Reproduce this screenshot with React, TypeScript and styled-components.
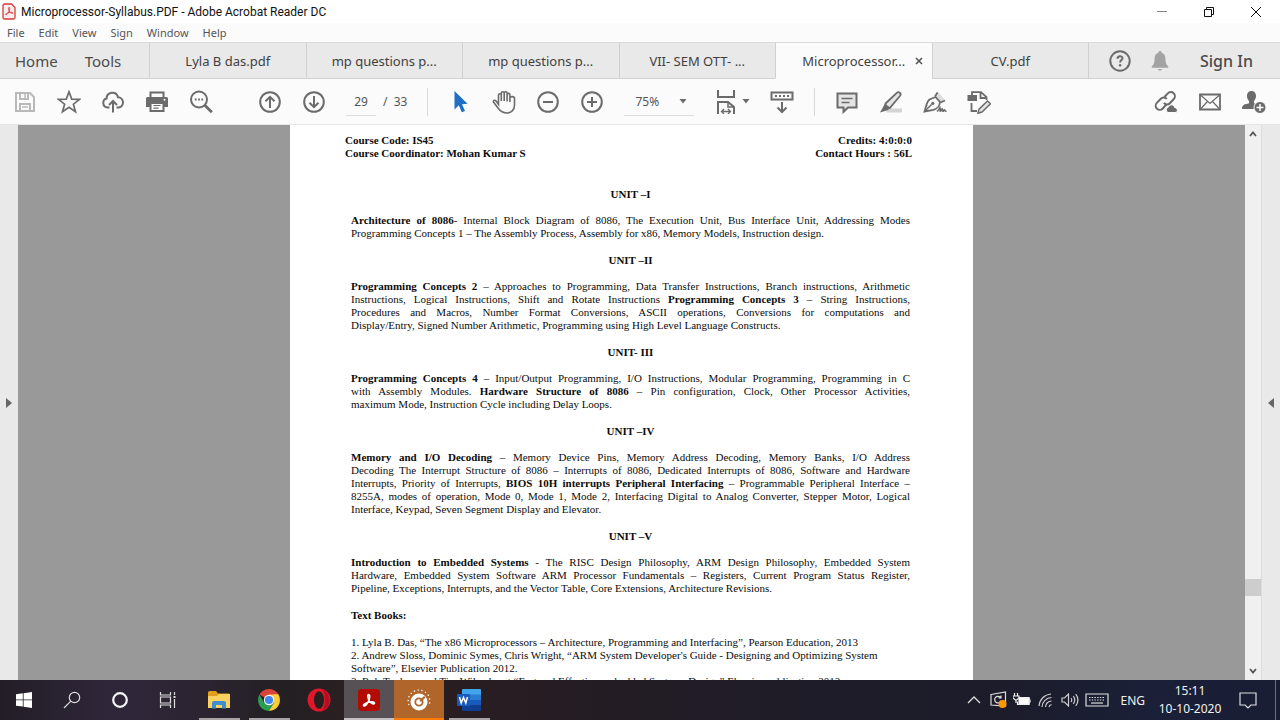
import React from "react";
import styled, { createGlobalStyle } from "styled-components";

const UI = `"Noto Sans", "Open Sans", sans-serif`;

const GlobalStyle = createGlobalStyle`
  * { box-sizing: border-box; }
  html, body { margin: 0; padding: 0; }
  body { font-family: ${UI}; background: #999; color: #333; }
  button { font: inherit; color: inherit; border: 0; background: none; padding: 0; margin: 0; display: flex; align-items: center; justify-content: center; }
  svg { display: block; flex: none; }
`;

const Window = styled.div`
  display: flex;
  flex-direction: column;
  height: 100vh;
  overflow: hidden;
`;

const TitleBar = styled.header`
  display: flex;
  align-items: center;
  height: 23px;
  flex: none;
  background: #fff;
  padding: 0 1px 0 2px;
`;

const Title = styled.h1`
  flex: 1;
  margin: 0 0 0 5px;
  font-family: Roboto, "Open Sans", sans-serif;
  font-size: 12px;
  line-height: 22px;
  font-weight: 400;
  color: #111;
`;

const WindowButton = styled.button`
  width: 47px;
  height: 23px;
`;

const MenuBar = styled.nav`
  display: flex;
  gap: 14px;
  height: 19px;
  flex: none;
  padding-left: 7px;
  background: #fbfbfb;
`;

const MenuItem = styled.button`
  font-size: 11px;
  line-height: 18px;
  color: #555;
`;

const TabBar = styled.div`
  display: flex;
  height: 37px;
  flex: none;
  background: #e9e9e9;
  border-top: 1px solid #dcdcdc;
`;

const MainTabs = styled.div`
  display: flex;
  align-items: center;
  gap: 27px;
  width: 149px;
  padding-left: 15px;
  border-bottom: 1px solid #d0d0d0;
`;

const MainTab = styled.button`
  font-size: 15px;
  line-height: 20px;
  color: #4b4b4b;
`;

const FileTab = styled.button<{ $active?: boolean }>`
  flex: 1;
  position: relative;
  font-size: 13px;
  line-height: 20px;
  color: #3f3f3f;
  border-left: 1px solid #d0d0d0;
  border-bottom: 1px solid ${(p) => (p.$active ? "#fbfbfb" : "#d0d0d0")};
  background: ${(p) => (p.$active ? "#fbfbfb" : "transparent")};
`;

const CloseMark = styled.span`
  position: absolute;
  right: 9px;
  top: 14px;
`;

const Account = styled.div`
  display: flex;
  align-items: center;
  width: 192px;
  padding-left: 20px;
  border-left: 1px solid #d0d0d0;
  border-bottom: 1px solid #d0d0d0;
`;

const BellButton = styled.button`
  margin-left: 20px;
`;

const SignIn = styled.button`
  margin-left: 31px;
  font-size: 16px;
  line-height: 20px;
  font-weight: 500;
  color: #4b4b4b;
`;

const ToolBar = styled.div`
  display: flex;
  align-items: center;
  height: 46px;
  flex: none;
  padding: 0 14px 0 13px;
  background: #fbfbfb;
  border-bottom: 1px solid #e6e6e6;
  font-size: 12px;
  color: #555;
`;

const ToolGroup = styled.div<{ $left?: number }>`
  display: flex;
  align-items: center;
  gap: 20px;
  margin-left: ${(p) => p.$left ?? 0}px;
`;

const ToolButton = styled.button`
  width: 24px;
  height: 24px;
`;

const MenuToolButton = styled(ToolButton)`
  width: 38px;
  justify-content: space-between;
`;

const Divider = styled.span<{ $left: number }>`
  width: 1px;
  height: 28px;
  margin-left: ${(p) => p.$left}px;
  background: #d8d8d8;
`;

const PageField = styled.label`
  display: flex;
  align-items: center;
  gap: 7px;
  margin-left: 20px;
  line-height: 20px;
  white-space: pre;
`;

const PageInput = styled.input`
  width: 30px;
  height: 28px;
  padding: 0;
  border: 0;
  border-bottom: 1px solid #dedede;
  background: none;
  text-align: center;
  font: 12px/20px ${UI};
  color: #555;
`;

const ZoomField = styled.div`
  display: flex;
  align-items: center;
  width: 70px;
  height: 28px;
  margin-left: 20px;
  padding-right: 7px;
  border-bottom: 1px solid #dedede;
`;

const ZoomSelect = styled.select`
  flex: 1;
  min-width: 0;
  height: 28px;
  padding: 1px 0 0 11px;
  border: 0;
  background: none;
  appearance: none;
  font: 12px/20px ${UI};
  color: #555;
`;

const Spacer = styled.span`
  flex: 1;
`;

const Workspace = styled.main`
  display: flex;
  flex: 1;
  min-height: 0;
  background: #999;
`;

const SidePanel = styled.button`
  width: 18px;
  flex: none;
  background: #e9e9e9;
`;

const Canvas = styled.div`
  flex: 1;
  display: flex;
  justify-content: center;
  overflow: hidden;
`;

const Page = styled.article`
  width: 683px;
  flex: none;
  padding: 9px 61px 0 55px;
  background: #fff;
  color: #0c0c0c;
  font: 11px/13px "Liberation Serif", serif;
`;

const CourseHeader = styled.div`
  display: flex;
  justify-content: space-between;
  margin-bottom: 28px;
  font-weight: 700;
  white-space: pre-line;
`;

const RightColumn = styled.div`
  text-align: right;
`;

const Body = styled.div`
  padding: 0 2px 0 6px;
`;

const UnitTitle = styled.h2`
  margin: 0 0 13px;
  font-size: 11px;
  line-height: 13px;
  text-align: center;
`;

const Paragraph = styled.p`
  margin: 0 0 14px;
`;

const Line = styled.span`
  display: block;
  text-align: justify;
  text-align-last: justify;

  &:last-child {
    text-align-last: auto;
  }
`;

const BooksTitle = styled(UnitTitle)`
  margin-bottom: 14px;
  text-align: left;
`;

const Book = styled.p`
  margin: 0;
`;

const ScrollTrack = styled.div`
  display: flex;
  flex-direction: column;
  align-items: center;
  width: 17px;
  flex: none;
  background: #f0f0f0;
  border-right: 1px solid #dcdcdc;
`;

const ScrollButton = styled.button`
  width: 16px;
  height: 18px;
`;

const ScrollGap = styled.div<{ $grow: number }>`
  flex: ${(p) => p.$grow};
`;

const ScrollThumb = styled.div`
  width: 16px;
  height: 17px;
  background: #cdcdcd;
`;

const TaskBar = styled.footer`
  display: flex;
  align-items: stretch;
  height: 40px;
  flex: none;
  color: #f2f2f2;
  background: linear-gradient(90deg, #221e27 0%, #30263a 9%, #2c2431 16%, #231f22 22%, #2a2021 28%, #271d22 40%, #1f1c28 60%, #1c1c2a 78%, #1a2038 90%, #191d34 100%);
`;

const TaskApps = styled.div`
  display: flex;
  margin-left: 2px;
`;

const TaskItem = styled.button<{ $bg?: string; $line?: string }>`
  position: relative;
  width: 50px;
  background: ${(p) => p.$bg ?? "transparent"};

  &::after {
    content: "";
    position: absolute;
    bottom: 0;
    left: ${(p) => (p.$bg ? 0 : 5)}px;
    right: ${(p) => (p.$bg ? 0 : 4)}px;
    height: 2px;
    background: ${(p) => p.$line ?? "transparent"};
  }
`;

const SystemItem = styled.button`
  width: 48px;
`;

const Tray = styled.div`
  display: flex;
  align-items: center;
  gap: 6px;
  margin-left: auto;
`;

const TrayButton = styled.button`
  min-width: 18px;
  height: 40px;
  font-size: 12px;
`;

const Language = styled(TrayButton)`
  margin: 0 3px 0 5px;
`;

const Clock = styled.button`
  flex-direction: column;
  width: 72px;
  font-size: 12px;
  line-height: 18px;
`;

const Notifications = styled(TrayButton)`
  width: 32px;
  margin-right: 5px;
`;

const DesktopEdge = styled.button`
  width: 5px;
  height: 40px;
  border-left: 1px solid #6b6f80;
`;

type IconProps = { w?: number; h?: number; color?: string; stroke?: number; children: React.ReactNode };

const Icon = ({ w = 24, h = 24, color = "#6b6b6b", stroke = 2, children }: IconProps) => (
  <svg width={w} height={h} viewBox={`0 0 ${w} ${h}`} fill="none" stroke={color} strokeWidth={stroke} aria-hidden="true">
    {children}
  </svg>
);

const Caret = () => (
  <Icon w={8} h={5} stroke={0}><path d="M0.5 0h7L4 4.6z" fill="#6b6b6b" /></Icon>
);

const ACROBAT = "M7 3c1.4 0 .9 2.6.4 4-.5 1.500-2.200 4.400-3.500 4.400-1.500 0 .2-2.100 3-2.700 2.300-.6 4.600-.4 4.600.6 0 1.200-2.400.3-3.500-1C6.700 6.900 6 3 7 3z";

export default function App() {
  return (
    <Window>
      <GlobalStyle />
      <TitleBar>
        <Icon w={14} h={17} stroke={1.3} color="#d23b38">
          <path d="M2.500 1h7L13 4.500V14.500a1.500 1.500 0 0 1-1.500 1.500h-9A1.500 1.500 0 0 1 1 14.500v-12A1.500 1.500 0 0 1 2.500 1z" fill="#fbeeee" />
          <path d={ACROBAT} strokeWidth="1" transform="translate(0.6 1.600) scale(.9)" />
        </Icon>
        <Title>Microprocessor-Syllabus.PDF - Adobe Acrobat Reader DC</Title>
        <WindowButton aria-label="Minimize"><Icon w={12} h={12} stroke={1} color="#888"><path d="M1 5.500h10" /></Icon></WindowButton>
        <WindowButton aria-label="Restore"><Icon w={12} h={12} stroke={1} color="#111"><path d="M1.500 3.500h7v7h-7zM3.500 3.500v-2h7v7h-2" /></Icon></WindowButton>
        <WindowButton aria-label="Close"><Icon w={12} h={12} stroke={1} color="#111"><path d="M1 1l10 10M11 1L1 11" /></Icon></WindowButton>
      </TitleBar>
      <MenuBar>
        {["File", "Edit", "View", "Sign", "Window", "Help"].map((m) => <MenuItem key={m}>{m}</MenuItem>)}
      </MenuBar>
      <TabBar>
        <MainTabs>
          <MainTab>Home</MainTab>
          <MainTab>Tools</MainTab>
        </MainTabs>
        <FileTab>Lyla B das.pdf</FileTab>
        <FileTab>mp questions p...</FileTab>
        <FileTab>mp questions p...</FileTab>
        <FileTab>VII- SEM OTT- ...</FileTab>
        <FileTab $active>
          Microprocessor...
          <CloseMark><Icon w={8} h={8} stroke={1.6} color="#555"><path d="M1 1l6 6M7 1L1 7" /></Icon></CloseMark>
        </FileTab>
        <FileTab>CV.pdf</FileTab>
        <Account>
          <button aria-label="Help">
            <Icon w={22} h={22}>
              <circle cx="11" cy="11" r="9.700" />
              <path d="M8.500 8.800c0-3.300 5-3.300 5-.5 0 1.800-2.400 1.900-2.400 4.200" />
              <circle cx="11.100" cy="15.200" r="1.200" fill="#6b6b6b" stroke="none" />
            </Icon>
          </button>
          <BellButton aria-label="Notifications">
            <Icon w={18} h={20} stroke={0}>
              <path d="M9 0a1.600 1.600 0 0 1 1.600 1.800C13.500 2.600 14.400 5 14.400 8c0 4 .8 5.500 2.800 7.200v1.600H.8v-1.600C2.800 13.500 3.600 12 3.600 8c0-3 .9-5.400 3.800-6.200A1.600 1.600 0 0 1 9 0zM7 18h4c-.4 2-3.600 2-4 0z" fill="#a3a3a3" />
            </Icon>
          </BellButton>
          <SignIn>Sign In</SignIn>
        </Account>
      </TabBar>
      <ToolBar>
        <ToolGroup>
          <ToolButton aria-label="Save">
            <Icon color="#b9b9b9"><path d="M3 3h14l4 4v14H3zM7 3v6h8V3M7 21v-7h10v7" /><path d="M12 4v4M9 17h6" strokeWidth="1.500" /></Icon>
          </ToolButton>
          <ToolButton aria-label="Star">
            <Icon stroke={1.7}><path d="M12 1.800l2.700 7.300 7.800.3-6.100 4.800 2.100 7.500L12 17.300l-6.500 4.400 2.100-7.500L1.500 9.400l7.800-.3z" /></Icon>
          </ToolButton>
          <ToolButton aria-label="Upload to cloud">
            <Icon><path d="M8.500 17.500H6.500A4.600 4.600 0 0 1 5.600 8.500C5.800 1.600 15.300.6 17 7.200a5.200 5.200 0 0 1 .8 10.300h-2.300" /><path d="M12 22.500V11.500M8 15l4-4 4 4" /></Icon>
          </ToolButton>
          <ToolButton aria-label="Print">
            <Icon><path d="M5.500 8V2.500h13V8" /><path d="M1 8.500A1.500 1.500 0 0 1 2.500 7h19A1.500 1.500 0 0 1 23 8.500V17h-4v-4H5v4H1z" fill="#6b6b6b" stroke="none" /><path d="M5.500 13v8h13v-8z" fill="#fbfbfb" /><path d="M8.500 15.500h7M8.500 18.200h5" strokeWidth="1.200" /><circle cx="19.500" cy="9.800" r="1" fill="#fff" stroke="none" /></Icon>
          </ToolButton>
          <ToolButton aria-label="Search">
            <Icon><circle cx="10" cy="9.500" r="8" /><path d="M15.800 15.300l7 7" strokeWidth="2.800" /><path d="M5.800 9.500h1.800M9.100 9.500h1.800M12.400 9.500h1.800" strokeWidth="1.800" /></Icon>
          </ToolButton>
        </ToolGroup>
        <ToolGroup $left={45}>
          <ToolButton aria-label="Previous page"><Icon><circle cx="12" cy="12" r="9.800" /><path d="M12 18V7M7.500 11.300L12 6.800l4.500 4.500" /></Icon></ToolButton>
          <ToolButton aria-label="Next page"><Icon><circle cx="12" cy="12" r="9.800" /><path d="M12 6v11M7.500 12.700l4.500 4.500 4.500-4.500" /></Icon></ToolButton>
        </ToolGroup>
        <PageField>
          <PageInput defaultValue="29" aria-label="Page" />
          <span>/  33</span>
        </PageField>
        <Divider $left={20} />
        <ToolGroup $left={20}>
          <ToolButton aria-label="Select">
            <Icon stroke={0}><path d="M6.500 1v18.500l4.300-4.200 3 7 3.200-1.400-3-6.700 5.500-.4z" fill="#1f6fc6" /></Icon>
          </ToolButton>
          <ToolButton aria-label="Pan">
            <Icon stroke={1.600}>
              <path d="M6.500 14.500V5.200c0-1.900 2.800-1.900 2.800 0V11V3.200c0-2 2.900-2 2.900 0V11V3.200c0-2 2.900-2 2.900 0V11.500V4.800c0-1.900 2.800-1.900 2.800 0V12V8c0-1.900 4.600-1.900 4.600.5V15c0 5-3.500 8-7.500 8-4.300 0-6.700-1.700-9-5L1.800 12.600c-1.400-2 .9-3.100 2.300-1.500z" />
            </Icon>
          </ToolButton>
          <ToolButton aria-label="Zoom out"><Icon><circle cx="12" cy="12" r="9.800" /><path d="M7 12h10" /></Icon></ToolButton>
          <ToolButton aria-label="Zoom in"><Icon><circle cx="12" cy="12" r="9.800" /><path d="M7 12h10M12 7v10" /></Icon></ToolButton>
        </ToolGroup>
        <ZoomField>
          <ZoomSelect aria-label="Zoom level" defaultValue="75%"><option>75%</option></ZoomSelect>
          <Caret />
        </ZoomField>
        <ToolGroup $left={18}>
          <MenuToolButton aria-label="Fit width">
            <Icon w={26}><path d="M6 0v7h16V0M6 24V12h10l6 5v7" /><path d="M16 12v5h6" strokeWidth="1.500" /><path d="M9.500 21.500h9M12 19l-2.500 2.500L12 24M16 19l2.500 2.500L16 24" strokeWidth="1.300" /></Icon>
            <Caret />
          </MenuToolButton>
          <ToolButton aria-label="Scrolling">
            <Icon><path d="M1.500 2.500h21v7h-21z" /><path d="M5 6h2M9 6h2M13 6h2M17 6h2" /><path d="M12 12v10M7.500 17.500L12 22l4.500-4.500" /></Icon>
          </ToolButton>
        </ToolGroup>
        <Divider $left={20} />
        <ToolGroup $left={20}>
          <ToolButton aria-label="Comment">
            <Icon><path d="M2.500 3.500h19v14H13l-4.500 4.300v-4.300h-6z" fill="#e4e4e4" /><path d="M6.500 8.500h11M6.500 12.500h8" strokeWidth="1.500" /></Icon>
          </ToolButton>
          <ToolButton aria-label="Highlight">
            <Icon stroke={1.800}><path d="M9 18.500h14v4H7z" fill="#d4d4d4" stroke="none" /><path d="M6.500 13.500L17.800 2.800c2-1.900 5 .8 3.300 3L11 17.800l-4.500-.3z" fill="#e4e4e4" /><path d="M6 13.500l5.500 4.500-3 2.300L1 22.500z" fill="#6b6b6b" stroke="none" /></Icon>
          </ToolButton>
          <ToolButton aria-label="Sign">
            <Icon stroke={1.800}><path d="M12.500 6.500L15 1.500l7 9-4.500 2z" fill="#dcdcdc" stroke="none" /><path d="M1.500 21.500C3 17 3.500 12 6.500 9.500l6-2.500 4.500 5c-.5 5-2.500 6.500-6.500 7.800z" /><path d="M12 6.500l2.500-4M17.500 12.500l4.500-2" /><path d="M1.500 21.500l7-7" strokeWidth="1.400" /><circle cx="9.800" cy="13.400" r="1.600" fill="#6b6b6b" stroke="none" /><path d="M14 21.500c1.500-1 2.500-3 3-4 .5 1-.5 3.500.3 3.800.8 0 1.300-2 1.900-2.500.5.500 0 2.300.8 2.500.7 0 .9-1.500 1.500-1.500.4.300.3 1.600 2 1.500" strokeWidth="1.600" /></Icon>
          </ToolButton>
          <ToolButton aria-label="Edit PDF">
            <Icon stroke={1.800}><path d="M5 6V2.200h9l5.500 5V10M13.500 2.500V8h6M4.500 13v8h5.500" /><path d="M.5 5h9.500v6H.5z" fill="#6b6b6b" stroke="none" /><path d="M20.500 11l3 2.800-8.500 8.200-4 1.200 1-4z" fill="#e4e4e4" strokeWidth="1.500" /></Icon>
          </ToolButton>
        </ToolGroup>
        <Spacer />
        <ToolGroup>
          <ToolButton aria-label="Share link">
            <Icon><path d="M10.500 7l3.300-3.600a4.100 4.100 0 0 1 6 5.600l-4 4.200a4 4 0 0 1-6-.3" /><path d="M12.300 14.500l-3.500 4a4 4 0 0 1-6-5.600l4-4.200a4 4 0 0 1 6 .3" /><path d="M14 22.500a3 3 0 0 1 .5-5.600c1.300-3.200 5.600-2.400 6 .5 4 .5 3.500 5.100.5 5.100z" fill="#6b6b6b" stroke="#fbfbfb" strokeWidth="1" /></Icon>
          </ToolButton>
          <ToolButton aria-label="Email">
            <Icon stroke={1.800}><path d="M2 4.500h20v15H2z" /><path d="M2.500 5l9.500 8.500L21.500 5M2.500 19l7-7.500M21.500 19l-7-7.500" strokeWidth="1.200" /></Icon>
          </ToolButton>
          <ToolButton aria-label="Share with others">
            <Icon stroke={0}><path d="M9.500 1c3 0 4.500 2.300 4.500 5 0 2-.8 3.800-2 5v2.300c1.300.8 3 1.200 4 2V19H0c0-4.500 3-4.600 7-5.700V11c-1.200-1.200-2-3-2-5 0-2.700 1.500-5 4.500-5z" fill="#6b6b6b" /><circle cx="18" cy="17.500" r="6" fill="#6b6b6b" stroke="#fbfbfb" strokeWidth="1" /><path d="M18 14v7M14.500 17.500h7" stroke="#fff" strokeWidth="1.500" /></Icon>
          </ToolButton>
        </ToolGroup>
      </ToolBar>
      <Workspace>
        <SidePanel aria-label="Open navigation pane"><Icon w={6} h={10} stroke={0}><path d="M0 0l6 5-6 5z" fill="#666" /></Icon></SidePanel>
        <Canvas>
          <Page>
            <CourseHeader>
              <div>{"Course Code: IS45\nCourse Coordinator: Mohan Kumar S"}</div>
              <RightColumn>{"Credits: 4:0:0:0\nContact Hours : 56L"}</RightColumn>
            </CourseHeader>
            <Body>
              <UnitTitle>UNIT –I</UnitTitle>
              <Paragraph>
                <Line><b>Architecture of 8086</b>- Internal Block Diagram of 8086, The Execution Unit, Bus Interface Unit, Addressing Modes </Line>
                <Line>Programming Concepts 1 – The Assembly Process, Assembly for x86, Memory Models, Instruction design.</Line>
              </Paragraph>
              <UnitTitle>UNIT –II</UnitTitle>
              <Paragraph>
                <Line><b>Programming Concepts 2</b> – Approaches to Programming, Data Transfer Instructions, Branch instructions, Arithmetic </Line>
                <Line>Instructions, Logical Instructions, Shift and Rotate Instructions <b>Programming Concepts 3</b> – String Instructions, </Line>
                <Line>Procedures and Macros, Number Format Conversions, ASCII operations, Conversions for computations and </Line>
                <Line>Display/Entry, Signed Number Arithmetic, Programming using High Level Language Constructs.</Line>
              </Paragraph>
              <UnitTitle>UNIT- III</UnitTitle>
              <Paragraph>
                <Line><b>Programming Concepts 4</b> – Input/Output Programming, I/O Instructions, Modular Programming, Programming in C </Line>
                <Line>with Assembly Modules. <b>Hardware Structure of 8086</b> – Pin configuration, Clock, Other Processor Activities, </Line>
                <Line>maximum Mode, Instruction Cycle including Delay Loops.</Line>
              </Paragraph>
              <UnitTitle>UNIT –IV</UnitTitle>
              <Paragraph>
                <Line><b>Memory and I/O Decoding</b> – Memory Device Pins, Memory Address Decoding, Memory Banks, I/O Address </Line>
                <Line>Decoding The Interrupt Structure of 8086 – Interrupts of 8086, Dedicated Interrupts of 8086, Software and Hardware </Line>
                <Line>Interrupts, Priority of Interrupts, <b>BIOS 10H interrupts Peripheral Interfacing</b> – Programmable Peripheral Interface – </Line>
                <Line>8255A, modes of operation, Mode 0, Mode 1, Mode 2, Interfacing Digital to Analog Converter, Stepper Motor, Logical </Line>
                <Line>Interface, Keypad, Seven Segment Display and Elevator.</Line>
              </Paragraph>
              <UnitTitle>UNIT –V</UnitTitle>
              <Paragraph>
                <Line><b>Introduction to Embedded Systems</b> - The RISC Design Philosophy, ARM Design Philosophy, Embedded System </Line>
                <Line>Hardware, Embedded System Software ARM Processor Fundamentals – Registers, Current Program Status Register, </Line>
                <Line>Pipeline, Exceptions, Interrupts, and the Vector Table, Core Extensions, Architecture Revisions.</Line>
              </Paragraph>
              <BooksTitle>Text Books:</BooksTitle>
              <Book>1. Lyla B. Das, “The x86 Microprocessors – Architecture, Programming and Interfacing”, Pearson Education, 2013</Book>
              <Book>2. Andrew Sloss, Dominic Symes, Chris Wright, “ARM System Developer's Guide - Designing and Optimizing System<br />Software”, Elsevier Publication 2012.</Book>
              <Book>3. Rob Toulson and Tim Wilmshurst “Fast and Effective embedded Systems Design” Elsevier publication 2012</Book>
            </Body>
          </Page>
        </Canvas>
        <ScrollTrack>
          <ScrollButton aria-label="Scroll up"><Icon w={8} h={6} stroke={1.800} color="#555"><path d="M1 5l3-3.500L7 5" /></Icon></ScrollButton>
          <ScrollGap $grow={436} />
          <ScrollThumb />
          <ScrollGap $grow={66} />
          <ScrollButton aria-label="Scroll down"><Icon w={8} h={6} stroke={1.800} color="#555"><path d="M1 1l3 3.500L7 1" /></Icon></ScrollButton>
        </ScrollTrack>
        <SidePanel aria-label="Open tools pane"><Icon w={6} h={10} stroke={0}><path d="M6 0L0 5l6 5z" fill="#666" /></Icon></SidePanel>
      </Workspace>
      <TaskBar>
        <SystemItem aria-label="Start"><Icon w={16} h={16} stroke={0}><path d="M0 2.300L6.800 1.300v6.200H0zM7.600 1.200L16 0v7.500H7.600zM0 8.300h6.800v6.300L0 13.700zM7.600 8.300H16V16l-8.400-1.200z" fill="#fff" /></Icon></SystemItem>
        <SystemItem aria-label="Search"><Icon w={18} h={18} stroke={1.200} color="#ddd"><circle cx="11.500" cy="6.500" r="5.200" /><path d="M7.800 10.200L1 17" /></Icon></SystemItem>
        <SystemItem aria-label="Cortana"><Icon w={18} h={18} stroke={2.200} color="#f5f5f5"><circle cx="9" cy="9" r="6.800" /></Icon></SystemItem>
        <SystemItem aria-label="Task view"><Icon w={18} h={18} stroke={1.200} color="#ddd"><path d="M1.500 1v3h10V1M1.500 17v-3h10v3M1.500 6h10v6h-10zM15.500 1v3M15.500 8v9" /><path d="M14.500 6h2" strokeWidth="2" /></Icon></SystemItem>
        <TaskApps>
          <TaskItem aria-label="File Explorer" $line="#a9a3a8">
            <Icon w={22} h={20} stroke={0}><path d="M0 2.500A1.500 1.500 0 0 1 1.500 1H8l2 2.500h10.500A1.500 1.500 0 0 1 22 5v13H0z" fill="#e0a01e" /><path d="M0 6h9l2-2h11v14H0z" fill="#fbd262" /><path d="M4 18.500V13a2 2 0 0 1 2-2h10a2 2 0 0 1 2 2v5.500h-4V15H8v3.500z" fill="#3f8fd0" /></Icon>
          </TaskItem>
          <TaskItem aria-label="Chrome" $line="#a9a3a8">
            <Icon w={22} h={22} stroke={0}>
              <path d="M11 11L1.500 5.500a11 11 0 0 1 19 0z" fill="#d9453a" /><path d="M1.500 5.500a11 11 0 0 0 9.500 16.500l4.800-8.300L11 11 6.200 13.700z" fill="#2a9d50" /><path d="M20.500 5.500a11 11 0 0 1-9.500 16.500l4.800-8.300L15.700 5.500z" fill="#fccd3a" /><path d="M11 5.500h9.500L15.500 12z" fill="#fccd3a" /><circle cx="11" cy="11" r="5.200" fill="#fff" /><circle cx="11" cy="11" r="4.100" fill="#4286ee" />
            </Icon>
          </TaskItem>
          <TaskItem aria-label="Opera">
            <Icon w={24} h={24} stroke={0}><circle cx="12" cy="12" r="11.500" fill="#e0172b" /><path d="M15 1.200A11.500 11.500 0 0 1 15 22.800c4-4 4-17.600 0-21.600z" fill="#b30f22" /><ellipse cx="12" cy="12" rx="5" ry="8.800" fill="#271e20" /></Icon>
          </TaskItem>
          <TaskItem aria-label="Acrobat Reader" $bg="#575054" $line="#c4bfc2">
            <Icon w={22} h={22} stroke={0}><rect width="22" height="22" rx="4" fill="#b30b00" /><path d={ACROBAT} stroke="#fff" strokeWidth="1.200" transform="translate(1 1.500) scale(1.350)" /></Icon>
          </TaskItem>
          <TaskItem aria-label="Recorder" $bg="#b0652a" $line="#ff7a00">
            <Icon w={24} h={24} stroke={0}><circle cx="12" cy="14" r="8.500" fill="#fff" /><path d="M2 17A10.800 10.800 0 1 1 22 17" stroke="#fff" strokeWidth="1.300" strokeDasharray="1.300 2.600" /><circle cx="12" cy="14" r="3.700" stroke="#b0652a" strokeWidth="1.800" /><path d="M12.500 12.500L17 8l1.500 1.500-4.500 4.500z" fill="#b0652a" /></Icon>
          </TaskItem>
          <TaskItem aria-label="Word" $line="#a9a3a8">
            <Icon w={24} h={22} stroke={0}><path d="M6 0h17a1 1 0 0 1 1 1v5H5V1a1 1 0 0 1 1-1z" fill="#41a5ee" /><path d="M5 5.500h19V11H5z" fill="#2b7cd3" /><path d="M5 11h19v5.500H5z" fill="#185abd" /><path d="M5 16.500h19V21a1 1 0 0 1-1 1H6a1 1 0 0 1-1-1z" fill="#103f91" /><rect y="5" width="13" height="12" rx="1" fill="#185abd" /><path d="M2.500 8l1.700 6L6.500 8.500l2.300 5.500L10.500 8" stroke="#fff" strokeWidth="1.500" /></Icon>
          </TaskItem>
        </TaskApps>
        <Tray>
          <TrayButton aria-label="Show hidden icons"><Icon w={14} h={8} stroke={1.300} color="#ddd"><path d="M1 7l6-6 6 6" /></Icon></TrayButton>
          <TrayButton aria-label="Updates"><Icon w={18} h={18} stroke={1.200} color="#ddd"><path d="M2 3.500L16.500 1v14L2 14zM11.500 6.500a3.300 3.300 0 1 0 .5 3.500M12 4.500v2.500H9.500" /><circle cx="13.500" cy="13" r="4" fill="#ff9800" stroke="none" /></Icon></TrayButton>
          <TrayButton aria-label="Battery"><Icon w={18} h={14} stroke={1.200} color="#eee"><path d="M6 4.500h10v7H4.500v-3" /><path d="M6 5h10v6H6z" fill="#fff" /><path d="M17 6.500v3M1.500 0v3M4.500 0v3M0 3h6v2L3 7.500 0 5zM3 7v3" /></Icon></TrayButton>
          <TrayButton aria-label="Wi-Fi"><Icon w={16} h={16} stroke={1.200} color="#ccc"><path d="M1 14A13 13 0 0 1 13 2M4 15A10 10 0 0 1 13.500 5.500M7.500 15A6 6 0 0 1 13.500 9M11 15a3 3 0 0 1 2.500-2.500" /></Icon></TrayButton>
          <TrayButton aria-label="Volume"><Icon w={18} h={14} stroke={1.200} color="#ccc"><path d="M1 5h2.500L7.500 1v12L3.500 9H1zM10 5q1.500 2 0 4M12.300 3.200q3 3.800 0 7.600M14.700 1.200q4.500 5.800 0 11.600" /></Icon></TrayButton>
          <TrayButton aria-label="Touch keyboard"><Icon w={24} h={14} stroke={1.200} color="#ddd"><path d="M1 1h22v12H1z" /><path d="M4 4.500h16M4 7h16" strokeDasharray="1.500 1.200" /><path d="M6 10h12" /></Icon></TrayButton>
          <Language>ENG</Language>
          <Clock><span>15:11</span><span>10-10-2020</span></Clock>
          <Notifications aria-label="Action center"><Icon w={18} h={18} stroke={1.200} color="#ddd"><path d="M1 2h16v12h-5l-3 3-3-3H1z" /></Icon></Notifications>
          <DesktopEdge aria-label="Show desktop" />
        </Tray>
      </TaskBar>
    </Window>
  );
}
